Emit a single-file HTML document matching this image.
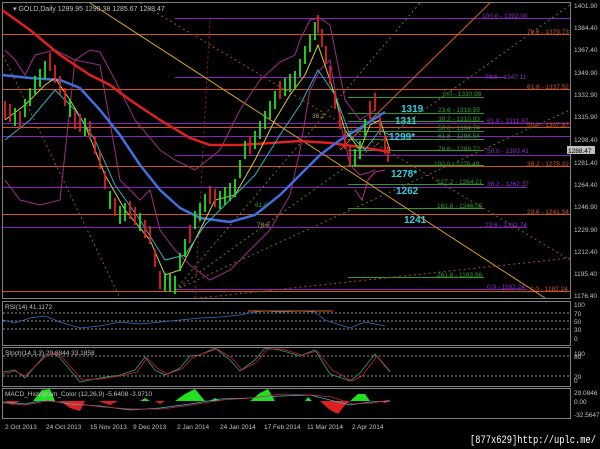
<!DOCTYPE html>
<html><head><meta charset="utf-8"><style>
html,body{margin:0;padding:0;background:#000;width:600px;height:449px;overflow:hidden}
svg{display:block;font-family:"Liberation Sans",sans-serif}
</style></head><body>
<svg width="600" height="449" viewBox="0 0 600 449" xmlns="http://www.w3.org/2000/svg">
<rect width="600" height="449" fill="#000"/>
<g fill="none" stroke-width="1">
<rect x="2.5" y="2.5" width="568" height="296" stroke="#808080"/>
<rect x="2.5" y="301.5" width="568" height="44" stroke="#808080"/>
<rect x="2.5" y="347.5" width="568" height="39" stroke="#808080"/>
<rect x="2.5" y="388.5" width="568" height="30" stroke="#808080"/>
<g stroke="#d2561a">
<line x1="3" y1="34.5" x2="570" y2="34.5"/><line x1="3" y1="89.5" x2="570" y2="89.5"/>
<line x1="3" y1="127.5" x2="570" y2="127.5"/><line x1="3" y1="166.5" x2="570" y2="166.5"/>
<line x1="3" y1="214.5" x2="570" y2="214.5"/><line x1="3" y1="291.5" x2="570" y2="291.5"/>
</g>
<g stroke="#8a1fc0">
<line x1="175" y1="18.5" x2="570" y2="18.5"/><line x1="175" y1="77.5" x2="505" y2="77.5"/>
<line x1="3" y1="123.5" x2="570" y2="123.5"/><line x1="3" y1="136.5" x2="570" y2="136.5"/>
<line x1="175" y1="155.5" x2="570" y2="155.5"/><line x1="3" y1="187.5" x2="527" y2="187.5"/>
<line x1="3" y1="227.5" x2="527" y2="227.5"/><line x1="175" y1="289.5" x2="527" y2="289.5"/>
</g>
<g stroke="#2e9a2e">
<line x1="348" y1="97.5" x2="484" y2="97.5"/><line x1="348" y1="113.5" x2="484" y2="113.5"/>
<line x1="348" y1="121.5" x2="484" y2="121.5"/><line x1="348" y1="131.5" x2="484" y2="131.5"/>
<line x1="348" y1="139.5" x2="484" y2="139.5"/><line x1="348" y1="150.5" x2="484" y2="150.5"/>
<line x1="348" y1="165.5" x2="484" y2="165.5"/><line x1="348" y1="184.5" x2="484" y2="184.5"/>
<line x1="348" y1="208.5" x2="484" y2="208.5"/><line x1="348" y1="277.5" x2="484" y2="277.5"/>
</g>
<line x1="90" y1="3" x2="545" y2="298" stroke="#d7a020"/>
<line x1="340" y1="150" x2="490" y2="3" stroke="#e06020"/>
<g stroke-dasharray="2,3">
<line x1="3" y1="55" x2="120" y2="298" stroke="#a05020"/>
<line x1="140" y1="3" x2="570" y2="260" stroke="#a05020"/>
<line x1="195" y1="298" x2="210" y2="20" stroke="#a02020"/>
<line x1="175" y1="290" x2="420" y2="3" stroke="#707020"/>
<line x1="175" y1="290" x2="570" y2="5" stroke="#707020"/>
<line x1="175" y1="290" x2="570" y2="110" stroke="#707020"/>
<line x1="200" y1="298" x2="570" y2="258" stroke="#a05020"/>
</g>
<polyline stroke="#a02c8a" points="5,50 15,60 25,75 35,55 55,50 75,60 100,65 120,180 140,200 150,190 160,230 175,250 190,265 210,280 230,270 250,250 270,230 290,195 300,150 310,90 320,70 330,60 340,120 350,165 360,175 370,172 375,170"/>
<polyline stroke="#a02c8a" points="5,180 20,200 40,205 60,200 75,60 90,50 100,52 115,80 135,120 160,150 175,160 195,170 220,150 240,110 260,80 280,62 295,55 300,40 310,20 320,18 330,25 345,100 360,120 375,110"/>
<polyline stroke="#e02020" stroke-width="2.5" points="2,10 30,30 60,55 90,75 110,85 130,100 160,120 190,138 210,145 240,145 270,143 300,141 330,143 360,147 390,152"/>
<polyline stroke="#4070e0" stroke-width="2.5" points="2,75 30,78 60,80 80,88 100,110 120,135 140,165 160,190 180,208 200,218 230,222 255,215 280,195 300,175 320,155 340,140 360,128 385,112"/>
<polyline stroke="#d0d030" points="5,120 25,105 45,85 55,78 70,100 85,125 105,175 125,210 150,240 165,275 180,270 200,230 215,200 235,195 255,160 275,120 290,95 305,75 318,45 330,80 345,130 360,150 370,125 380,120 390,150"/>
<polyline stroke="#30b0c0" points="5,140 30,120 55,90 75,110 95,140 115,185 140,220 165,260 185,255 205,225 230,200 255,175 280,135 300,105 318,70 335,95 350,135 365,150 380,130 390,135"/>
<polyline stroke="#c03080" points="355,190 362,200 368,180 375,172 385,170"/>
<!-- candles -->
<path stroke="#e02020" stroke-width="1.8" d="M5 101V119M10 104V122M20 111V129M50 53V71M55 65V83M60 76V94M65 88V106M75 111V129M80 114V132M90 121V139M95 136V154M100 151V169M105 171V189M115 198V216M130 201V219M135 207V225M145 220V238M150 226V244M155 249V267M160 271V289M190 225V243M210 186V204M215 189V207M250 136V154M280 81V99M318 15V33M322 29V47M326 46V64M330 66V84M335 91V109M340 111V129M345 131V149M350 147V165M370 101V119M375 93V111M380 117V135M385 136V154M388 146V162"/>
<path stroke="#20e020" stroke-width="1.8" d="M15 108V126M25 99V117M30 88V106M35 76V94M40 69V87M45 61V79M70 99V117M85 118V136M110 191V209M120 206V224M125 203V221M140 213V231M165 273V291M170 274V292M175 276V294M180 253V271M185 239V257M195 211V229M200 203V221M205 194V212M220 191V209M225 187V205M230 183V201M235 179V197M240 160V178M245 141V159M255 131V149M260 121V139M265 111V129M270 101V119M275 91V109M285 78V96M290 74V92M295 71V89M300 59V77M305 46V64M310 34V52M315 22V40M355 149V167M360 141V159M365 119V137"/>
</g>
<g font-size="6.5" fill="#2ea02e">
<text x="443" y="96">0.0 - 1330.98</text><text x="438" y="112">23.6 - 1318.59</text>
<text x="438" y="121">38.2 - 1310.93</text><text x="438" y="130">50.0 - 1304.74</text>
<text x="438" y="138">61.8 - 1298.54</text><text x="438" y="151">78.6 - 1289.72</text>
<text x="434" y="166">100.0 - 1278.49</text><text x="437" y="184">127.2 - 1264.21</text>
<text x="437" y="208">161.8 - 1246.05</text><text x="437" y="277">261.8 - 1193.56</text>
<text x="255" y="207">61.8</text>
</g>
<g font-size="6.5" fill="#9030d0">
<text x="482" y="18">100.0 - 1392.00</text><text x="485" y="79">78.6 - 1347.11</text>
<text x="487" y="123">61.8 - 1311.87</text><text x="487" y="153">50.0 - 1303.41</text>
<text x="487" y="186">38.2 - 1262.37</text><text x="485" y="227">23.6 - 1231.74</text>
<text x="487" y="289">0.0 - 1182.24</text>
</g>
<g font-size="6.5" fill="#d2561a">
<text x="527" y="34">78.6 - 1379.73</text><text x="527" y="89">61.8 - 1337.52</text>
<text x="527" y="127">50.0 - 1307.87</text><text x="527" y="166">38.2 - 1278.22</text>
<text x="527" y="214">23.6 - 1241.54</text><text x="530" y="291">0.0 - 1182.24</text>
</g>
<g font-size="6.5" fill="#b0a040"><text x="312" y="118">38.2</text><text x="257" y="227">78.6</text></g>
<g font-size="10" fill="#30d0e0" font-weight="bold">
<text x="401" y="112">1319</text><text x="395" y="124">1311</text><text x="389" y="140">1299*</text>
<text x="391" y="177">1278*</text><text x="396" y="194">1262</text><text x="404" y="223">1241</text>
</g>
<text x="13" y="11" font-size="7" fill="#c0c0c0">▾ GOLD,Daily  1289.95 1290.38 1285.67 1288.47</text>
<g font-size="6.5" fill="#c0c0c0">
<text x="574" y="8">1401.90</text><text x="574" y="30">1384.40</text><text x="574" y="52">1367.40</text>
<text x="574" y="75">1349.90</text><text x="574" y="97">1332.90</text><text x="574" y="119">1315.90</text>
<text x="574" y="142">1298.40</text><text x="574" y="165">1281.40</text><text x="574" y="187">1264.40</text>
<text x="574" y="209">1246.90</text><text x="574" y="232">1229.90</text><text x="574" y="254">1212.40</text>
<text x="574" y="276">1195.40</text><text x="574" y="298">1176.40</text>
<text x="574" y="307">100</text><text x="574" y="316">70</text><text x="574" y="324">50</text><text x="574" y="332">30</text><text x="574" y="341">0</text>
<text x="574" y="356">100</text><text x="574" y="359">80</text><text x="574" y="379">20</text><text x="574" y="383">0</text>
<text x="574" y="395">29.0846</text><text x="574" y="404">0.00</text><text x="574" y="417">-32.5647</text>
<text x="5" y="429">2 Oct 2013</text><text x="46" y="429">24 Oct 2013</text><text x="90" y="429">15 Nov 2013</text>
<text x="133" y="429">9 Dec 2013</text><text x="177" y="429">2 Jan 2014</text><text x="220" y="429">24 Jan 2014</text>
<text x="264" y="429">17 Feb 2014</text><text x="307" y="429">11 Mar 2014</text><text x="352" y="429">2 Apr 2014</text>
</g>
<rect x="567" y="146" width="28" height="8" fill="#c0c0c0"/><text x="568" y="153" font-size="6.5" fill="#000">1288.47</text>
<g stroke="#c0c0c0" stroke-dasharray="2,2" stroke-width="0.8">
<line x1="3" y1="313" x2="570" y2="313"/><line x1="3" y1="321" x2="570" y2="321"/><line x1="3" y1="329" x2="570" y2="329"/>
<line x1="3" y1="356" x2="570" y2="356"/><line x1="3" y1="376" x2="570" y2="376"/>
</g>
<text x="5" y="309" font-size="6.5" fill="#c0c0c0">RSI(14) 41.1172</text>
<text x="5" y="355" font-size="6.5" fill="#c0c0c0">Stoch(14,3,3) 29.8844 33.1858</text>
<polyline fill="none" stroke="#3070c0" stroke-width="0.8" points="3,320 15,323 30,318 45,316 60,322 80,328 100,326 120,322 140,324 160,322 180,320 200,318 220,317 240,315 255,312 265,311 280,312 300,311 315,312 325,320 340,325 350,328 365,322 375,324 385,326"/>
<line x1="248" y1="311" x2="333" y2="311" stroke="#e06020"/>
<polyline fill="none" stroke="#30a080" stroke-width="0.8" points="3,372 15,370 25,378 45,355 55,354 60,358 80,382 100,378 120,375 135,370 145,357 155,370 165,375 180,368 190,356 200,355 215,348 230,360 240,371 255,360 265,348 280,350 300,356 315,350 330,374 350,381 360,373 375,354 390,372"/>
<polyline fill="none" stroke="#d02020" stroke-width="0.8" points="3,374 15,371 25,376 45,357 55,353 62,357 82,380 100,379 120,376 137,372 147,358 157,368 167,374 182,369 192,358 202,354 217,349 232,358 242,370 257,362 267,349 282,349 302,355 317,351 332,370 352,381 362,376 377,356 390,371"/>
<!-- MACD histogram -->
<g fill="#20e020">
<polygon points="33,401 42,390 50,389 55,401"/><polygon points="175,401 185,394 195,389 205,401"/>
<polygon points="250,401 260,393 268,389 275,401"/><polygon points="350,401 358,394 365,394 370,401"/>
<polygon points="140,401 145,398 150,401"/><polygon points="210,401 215,398 220,401"/><polygon points="305,401 308,397 312,401"/>
</g>
<g fill="#e02020">
<polygon points="5,401 12,405 20,401"/><polygon points="60,401 70,408 80,411 85,401"/>
<polygon points="98,401 110,405 118,401"/><polygon points="155,401 160,404 165,401"/>
<polygon points="320,401 330,410 338,414 345,405 350,401"/><polygon points="378,401 385,403 390,401"/>
</g>
<text x="5" y="396" font-size="6.5" fill="#c0c0c0">MACD_Histogram_Color (12,26,9) -5.6408 -3.9710</text>
<polyline fill="none" stroke="#30c0c0" stroke-width="0.8" points="3,402 25,404 45,400 70,404 100,406 130,410 160,408 190,404 220,399 250,398 280,396 310,395 330,400 350,405 370,402 390,401"/>
<polyline fill="none" stroke="#d02040" stroke-width="0.8" points="3,403 25,405 47,401 72,403 102,407 132,409 162,409 192,405 222,400 252,398 282,394 312,395 332,397 352,404 372,403 390,400"/>
<text x="470" y="443" font-size="11" fill="#fff" font-family="Liberation Mono,monospace" textLength="126" lengthAdjust="spacingAndGlyphs">[877x629]http://uplc.me/</text>
</svg>
</body></html>
